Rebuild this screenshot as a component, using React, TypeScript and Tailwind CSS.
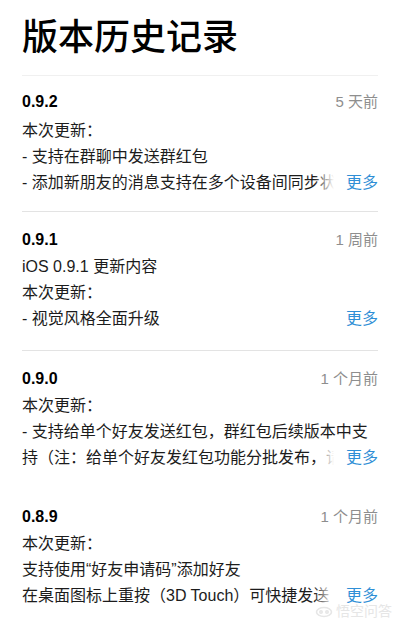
import React from "react";

type Entry = {
  version: string;
  date: string;
  lines: string[];
  last: string;
};

const entries: Entry[] = [
  {
    version: "0.9.2",
    date: "5 天前",
    lines: ["本次更新：", "- 支持在群聊中发送群红包"],
    last: "- 添加新朋友的消息支持在多个设备间同步状态",
  },
  {
    version: "0.9.1",
    date: "1 周前",
    lines: ["iOS 0.9.1 更新内容", "本次更新："],
    last: "- 视觉风格全面升级",
  },
  {
    version: "0.9.0",
    date: "1 个月前",
    lines: ["本次更新：", "- 支持给单个好友发送红包，群红包后续版本中支"],
    last: "持（注：给单个好友发红包功能分批发布，请耐心等待）",
  },
  {
    version: "0.8.9",
    date: "1 个月前",
    lines: ["本次更新：", "支持使用“好友申请码”添加好友"],
    last: "在桌面图标上重按（3D Touch）可快捷发送",
  },
];

export default function App() {
  return (
    <div
      className="relative w-[400px] h-[628px] overflow-hidden bg-white px-[22px] text-[#1c1c1c]"
      style={{ fontFamily: '"Liberation Sans", "Noto Sans CJK SC", sans-serif' }}
    >
      <h1 className="pt-[16px] text-[36px] leading-[44px] font-medium text-black">
        版本历史记录
      </h1>
      <div className="mt-[15px] h-px bg-[#f0f0f0]" />
      {entries.map((e, i) => (
        <div
          key={e.version}
          className={`${i === 0 ? "pt-[16px] pb-[15px]" : "pt-[18px] pb-[18px]"} ${
            i < 2 ? "border-b border-[#e3e3e3]" : ""
          }`}
        >
          <div className="flex items-center justify-between h-[20px]">
            <span className="text-[16px] font-bold text-black">{e.version}</span>
            <span className="text-[15px] text-[#8e8e8e]">{e.date}</span>
          </div>
          <div className={`${i === 0 ? "mt-[6px]" : "mt-[4px]"} text-[16px] leading-[26px]`}>
            {e.lines.map((l) => (
              <div key={l} className="whitespace-nowrap overflow-hidden">
                {l}
              </div>
            ))}
            <div className="flex items-center">
              <div className="relative flex-1 min-w-0 overflow-hidden whitespace-nowrap">
                {e.last}
                <span className="absolute right-0 top-0 h-full w-[20px] bg-linear-to-r from-white/0 to-white" />
              </div>
              <span className="ml-[12px] text-[16px] text-[#2f8fd6]">更多</span>
            </div>
          </div>
        </div>
      ))}
      <div className="absolute right-[8px] bottom-[6px] flex items-center gap-[3px] text-[14px] text-[#e6e6e6]">
        <svg width="18" height="12" viewBox="0 0 18 12" fill="none" stroke="#e6e6e6" strokeWidth="1.6">
          <ellipse cx="9" cy="6" rx="7.5" ry="4.5" />
          <circle cx="6" cy="6" r="1.2" />
          <circle cx="12" cy="6" r="1.2" />
        </svg>
        <span>悟空问答</span>
      </div>
    </div>
  );
}
